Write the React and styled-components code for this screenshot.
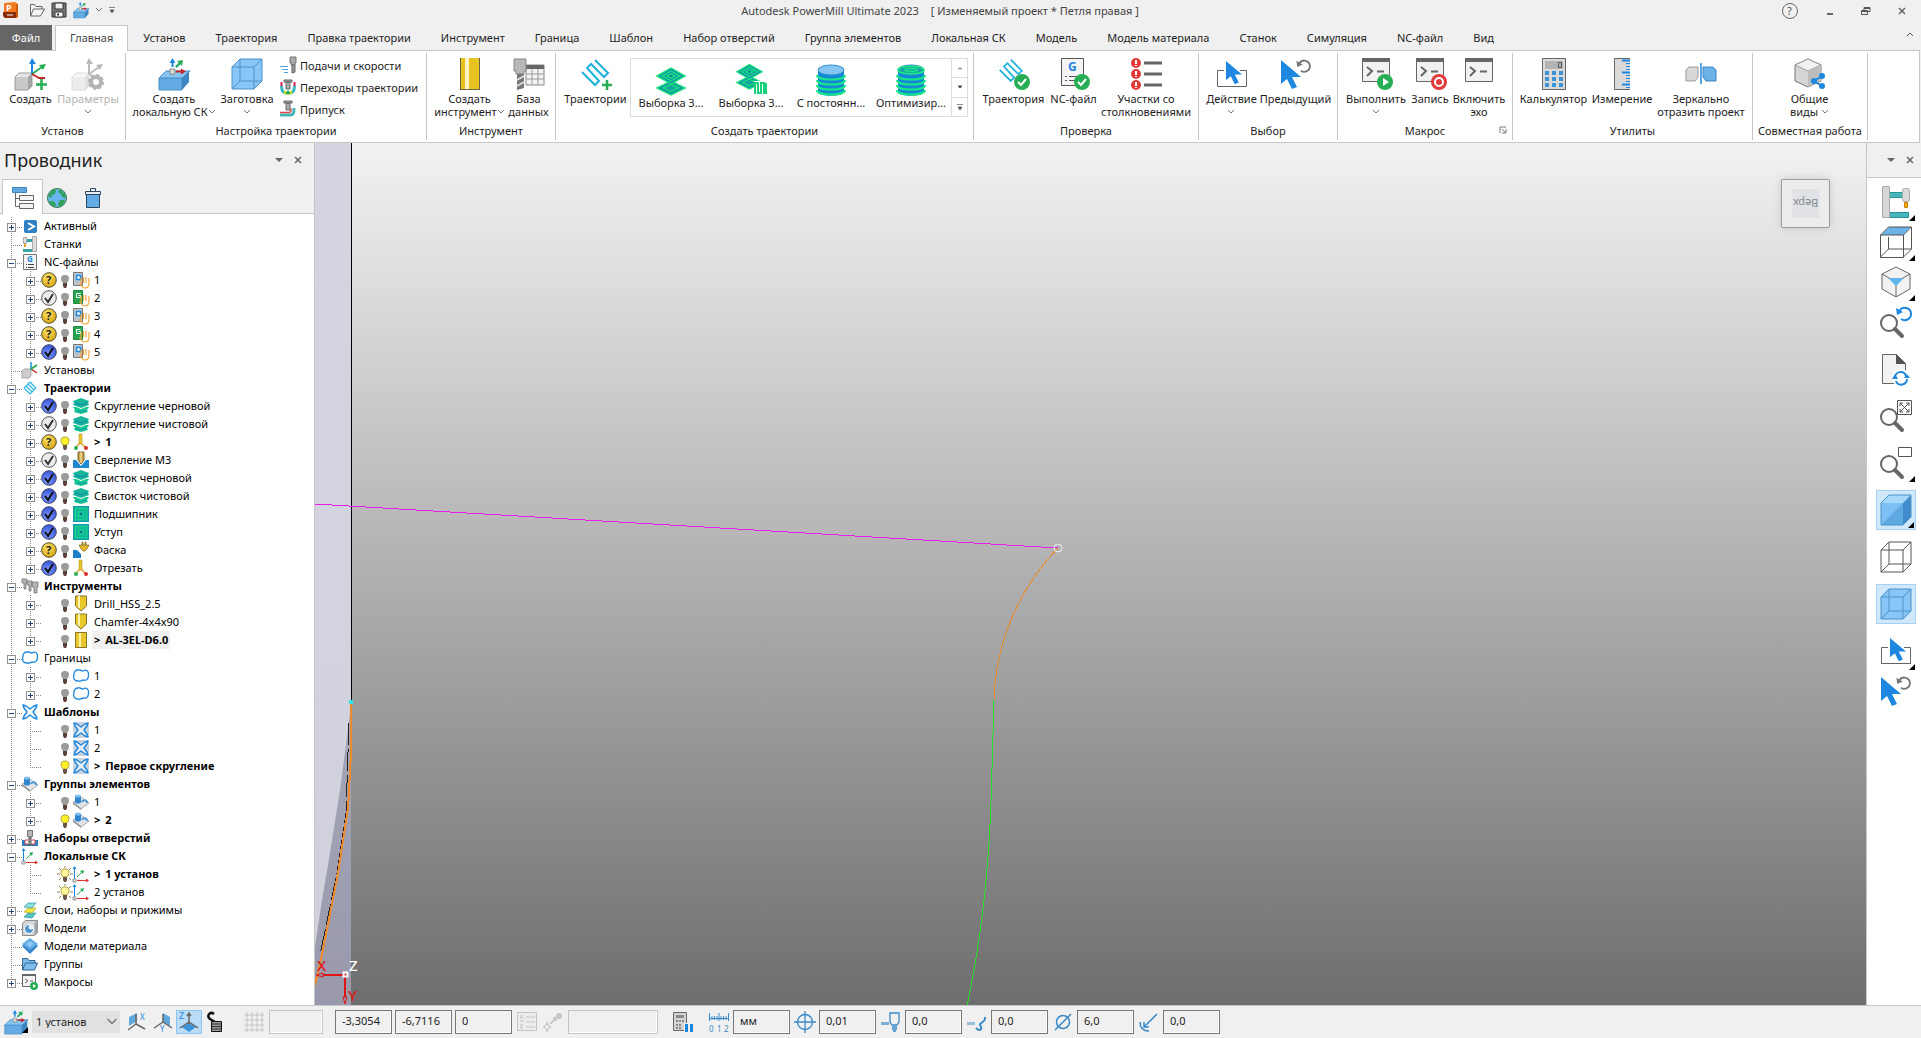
import { Fragment } from 'react'
import styled, { createGlobalStyle, css } from 'styled-components'

const GlobalStyle = createGlobalStyle`
  :root {
    --bg: #f0f0f0;
    --line: #c6c6c6;
    --text: #1e1e1e;
    --grey: #666;
    --blue: #1e88e0;
    --text-sm: 11px;
    --text-xl: 18px;
  }

  * {
    box-sizing: border-box;
  }

  body {
    margin: 0;
    background: var(--bg);
    color: var(--text);
    font-family: 'Noto Sans', 'Open Sans', sans-serif;
    font-size: var(--text-sm);
    line-height: 13px;
  }

  button,
  input,
  select {
    font: inherit;
    color: inherit;
  }
`

/* ---------- icons ---------- */

const cubeWire = (
  <path d="M1 9h22v22H1zM1 9l8-8h22l-8 8M31 1v22l-8 8M9 1v22h22M9 23l-8 8" />
)

const cursor = <path d="M0 0v24l6-5 5 10 5-2-5-10h9z" fill="#1e88e0" />

const lens = (
  <g fill="none" stroke="#666">
    <circle cx="9" cy="17" r="8" strokeWidth="2" />
    <path d="M15 23l7 7" strokeWidth="4" strokeLinecap="round" />
  </g>
)

const terminal = (
  <g>
    <path d="M2.500 1.500h27v22h-27z" fill="#f2f2f2" stroke="#666" />
    <path d="M2 0h28v4H2z" fill="#666" />
    <path d="M7 9l5 4-5 5M17 13.500h7" fill="none" stroke="#666" strokeWidth="2" />
  </g>
)

const okBadge = (
  <g>
    <circle cx="24" cy="24" r="8" fill="#27ae55" />
    <path d="M20 24l3 3 5-6" fill="none" stroke="#fff" strokeWidth="2" />
  </g>
)

const snake = (
  <path
    d="M2 14l13 13 4-4L7 10l4-4 13 13 4-4L15 2"
    fill="none"
    stroke="#1bb1dc"
    strokeWidth="2"
  />
)

const layers = (
  <g stroke="#16e07c" strokeWidth="1.500">
    <path d="M2 24l14-7 14 7-14 7z" fill="#1283b5" />
    <path d="M8 24l8-4 8 4-8 4z" fill="#12a99c" />
    <path d="M2 12l14-8 14 8-14 8z" fill="#1283b5" />
    <path d="M7 12l9-5 9 5-9 5z" fill="#1490b0" />
    <path d="M12 12l4-2 4 2-4 2z" fill="#0f6f9c" />
  </g>
)

const axes = (blue, green, red) => (
  <g fill="none" strokeWidth="2">
    <path d="M17 16V4" stroke={blue} />
    <path d="M17 0l4 6h-7z" fill={blue} />
    <path d="M17 16l10-7" stroke={green} />
    <path d="M31 6l-7 1 4 5z" fill={green} />
    <path d="M17 16l7 4h6" stroke={red} />
  </g>
)

const block = (
  <g strokeWidth="1">
    <path d="M1 20h23v12H1z" fill="#63abe2" stroke="#4a90c8" />
    <path d="M1 20l7-7h24l-7 7z" fill="#86c5f2" stroke="#4a90c8" />
    <path d="M24 20l7-7v11l-7 8z" fill="#3f86c0" />
    <path d="M12 11h5v5h-5z" fill="#ddd" stroke="#888" />
    <path d="M14.500 9V3M18 9l5-5" fill="none" stroke="#1e88e0" strokeWidth="2" />
    <path d="M14.500 0l3 5h-6z" fill="#1e88e0" />
    <path d="M18 9l4-4" stroke="#27ae55" strokeWidth="2" />
    <path d="M25 2l-1 6-5-5z" fill="#27ae55" />
    <path d="M18 13.500h6" stroke="#c62828" strokeWidth="2" />
    <path d="M28 13.500l-5-3v6z" fill="#c62828" />
  </g>
)

const greyCube = (
  <g>
    <path d="M0 19h13v13H0z" fill="#c9c9c9" />
    <path d="M0 19l4-4h13l-4 4z" fill="#e4e4e4" />
    <path d="M13 19l4-4v13l-4 4z" fill="#a5a5a5" />
    <path d="M0 19l4-4h13v13l-4 4H0z" fill="none" stroke="#9a9a9a" />
  </g>
)

const rings = top => (
  <g>
    <path d="M3 6v22c0 5 26 5 26 0V6z" fill="#1488d8" />
    <ellipse cx="16" cy="6" rx="13" ry="5" fill={top} stroke="#2f8fce" />
    <path
      d="M2 11c0 6 28 6 28 0M2 16c0 6 28 6 28 0M2 21c0 6 28 6 28 0M2 26c0 6 28 6 28 0"
      fill="none"
      stroke="#17e884"
      strokeWidth="2"
    />
  </g>
)

const undo = color => (
  <g fill="none" stroke={color}>
    <path d="M19 5c4-6 12-3 12 3 0 5-6 8-10 5" strokeWidth="2" />
    <path d="M16 2l1 7 6-3z" fill={color} stroke="none" />
  </g>
)

const miniLayers = (
  <g strokeWidth="1">
    <path d="M0 9h3l5 2 5-2h3l-2 3 1 2-7 2-7-2 1-2z" fill="#14c98f" />
    <path d="M2 12l6 2 6-2" fill="none" stroke="#1597b0" />
    <path d="M0 3l8-3 8 3-1 2 1 2-8 3-8-3 1-2z" fill="#16b59a" />
    <path d="M2 5l6 2 6-2" fill="none" stroke="#1283b5" />
  </g>
)

const miniAxes = (
  <g fill="none">
    <path d="M1.500 14V2" stroke="#1e88e0" />
    <path d="M1.500 0l2 3h-4z" fill="#1e88e0" />
    <path d="M4 14.500h10" stroke="#d33" />
    <path d="M16 14.500l-3-2v4z" fill="#d33" />
    <path d="M4 11l5-5" stroke="#27ae55" />
    <path d="M11 4l-1 4-3-3z" fill="#27ae55" />
    <path d="M0 13h3v3H0z" fill="#ddd" stroke="#999" strokeWidth="1" />
  </g>
)

const clover = (
  <path
    d="M1 1l3 1 4 3 4-3 3-1-1 3-3 4 3 4 1 3-3-1-4-3-4 3-3 1 1-3 3-4-3-4z"
    fill="#fff"
    fillOpacity=".6"
    stroke="#1e88e0"
    strokeWidth="1.500"
    strokeLinejoin="round"
  />
)

const bulbBase = color => (
  <path d="M6 11h4v3l-1 2H7l-1-2z" fill={color} />
)

const featurePart = (
  <g>
    <path d="M0 8l8-5 8 6-8 6z" fill="#e2e4e7" stroke="#aaa" />
    <path d="M0 8l8 6v2L0 10z" fill="#999" />
    <path d="M2 2v6c0 2 6 2 6 0V2z" fill="#2f86cf" />
    <ellipse cx="5" cy="2" rx="3" ry="1.500" fill="#7fc0ef" />
    <path d="M9 8c1-3 5-2 5 1" fill="none" stroke="#4a9ad8" strokeWidth="2" />
  </g>
)

const hand = (
  <path
    d="M6 12c2 0 2 4 6 4 3 0 4-2 4-5V6M8 13V6M10.500 11V5M13 11V5"
    fill="none"
    stroke="#f0a63a"
    strokeWidth="1.200"
  />
)

const miniTool = (
  <g fill="#b9b9b9" stroke="#777">
    <path d="M5.500.5h5v6h-5zM7 7h2v8H7z" />
    <path d="M6.500 9l3-1M6.500 12l3-1M6.500 15l3-1" stroke="#555" />
  </g>
)

const ICONS = {
  app: [
    16,
    <Fragment>
      <path d="M2 1l11-1 3 2v13l-3 1H2z" fill="#f47a1f" />
      <path d="M1 10h13v6H3l-2-2z" fill="#8a2c07" />
      <path d="M14 2l2 1v12l-2 1z" fill="#d35a0c" />
      <text x="4" y="9" fontSize="9" fontWeight="700" fill="#fff">
        P
      </text>
      <path d="M5 13h6" stroke="#fff" />
    </Fragment>,
  ],
  open: [
    16,
    <path
      d="M1.500 14V2.500h4l1.500 2h6V7M1.500 14l3-7h11l-4 7z"
      fill="#f4f4f4"
      stroke="#666"
    />,
  ],
  save: [
    16,
    <Fragment>
      <path d="M1 1h14v14H1z" fill="#777" stroke="#333" />
      <path d="M4 1h8v6H4z" fill="#eee" stroke="#333" />
      <path d="M4 10h8v5H4z" fill="#fff" stroke="#333" />
      <path d="M6 11.500h2v2H6z" fill="#333" />
    </Fragment>,
  ],
  block: [32, block],
  setupCreate: [
    32,
    <Fragment>
      {greyCube}
      {axes('#1e88e0', '#27ae55', '#c62828')}
      <path d="M26.500 21v11M21 26.500h11" stroke="#27ae55" strokeWidth="2.500" />
    </Fragment>,
  ],
  setupParams: [
    32,
    <Fragment>
      <g opacity=".35">{greyCube}</g>
      {axes('#bbb', '#bbb', '#bbb')}
      <circle cx="24" cy="24" r="5" fill="#fff" stroke="#b4b4b4" strokeWidth="4" />
      <circle
        cx="24"
        cy="24"
        r="7"
        fill="none"
        stroke="#b4b4b4"
        strokeWidth="2"
        strokeDasharray="3 2.500"
      />
    </Fragment>,
  ],
  stock: [
    32,
    <g fill="none" stroke="#4c93c9">
      <path d="M1 9l8-8h22v22l-8 8H1z" fill="#87c6f6" stroke="none" />
      {cubeWire}
    </g>,
  ],
  feeds: [
    16,
    <Fragment>
      <path d="M10 0h6v6h-1v2h-4V6h-1z" fill="#aaa" stroke="#777" />
      <path d="M12 8h3v7l-3 1z" fill="#999" stroke="#666" />
      <path d="M0 9.500h8M2 12.500h6M4 15.500h4" stroke="#4ea3dd" />
    </Fragment>,
  ],
  leads: [
    16,
    <Fragment>
      <path d="M1.500 3v5M14.500 3v5" stroke="#d81b60" strokeWidth="2" />
      <path d="M1.500 7c0 5 2 7 5 7M14.500 7c0 5-2 7-5 7" fill="none" stroke="#35b8c8" strokeWidth="3" />
      <path d="M4 13c3 2 5 2 8 0" fill="none" stroke="#dce32a" strokeWidth="3" />
      <path d="M8 11l3 4H5z" fill="#27ae55" />
      <path d="M4 1h8v2H4zM6 3h4v7H6z" fill="#aaa" stroke="#666" />
    </Fragment>,
  ],
  thickness: [
    16,
    <Fragment>
      <path d="M4 0h8v2H4zM6 2h4v7H6z" fill="#aaa" stroke="#666" />
      <path d="M0 14h10c4 0 4-3 4-7" fill="none" stroke="#45b5b8" strokeWidth="3" />
      <path d="M0 11.500h8c3 0 3-1 3-4" fill="none" stroke="#e04848" strokeWidth="1.500" />
    </Fragment>,
  ],
  toolCreate: [
    32,
    <Fragment>
      <path d="M6 0h20v32H6z" fill="#e6c321" />
      <path d="M11 0h4v32h-4z" fill="#fdf3c4" />
      <path d="M6.500 0v32M25.500 0v32" stroke="#6b6640" />
      <path d="M6 31.500h20" stroke="#6b6640" />
    </Fragment>,
  ],
  toolDb: [
    32,
    <Fragment>
      <path d="M13 7h18v20H13z" fill="#f3f3f3" stroke="#888" />
      <path d="M13 7h18v4H13z" fill="#666" />
      <path d="M13 16h18M13 21h18M19 11v16M25 11v16" stroke="#999" />
      <path d="M1 1h12v12h-2v3H3v-3H1z" fill="#b8b8b8" stroke="#888" />
      <path d="M4 16h7v14l-7 2z" fill="#777" />
      <path d="M4 22l7-4M4 28l7-4" stroke="#ddd" strokeWidth="2" />
    </Fragment>,
  ],
  snakeAdd: [
    32,
    <Fragment>
      {snake}
      <path d="M27 22v10M22 27h10" stroke="#27ae55" strokeWidth="2.500" />
    </Fragment>,
  ],
  snakeOk: [
    32,
    <Fragment>
      <g transform="scale(.85)">{snake}</g>
      {okBadge}
    </Fragment>,
  ],
  layers: [32, layers],
  layersRest: [
    32,
    <Fragment>
      <g transform="translate(0 -3) scale(.9)">{layers}</g>
      <path d="M19 17h13v14H19z" fill="#fff" />
      <path d="M20 30V19h3v10h3V19h3v10h2V19" fill="none" stroke="#17d27c" strokeWidth="2" />
    </Fragment>,
  ],
  rings: [32, rings('#86c5f2')],
  ringsOpt: [
    32,
    <Fragment>
      {rings('#1aa0a8')}
      <path d="M3 6c0-5 26-5 26 0s-26 5-26 0M10 6c0-2 12-2 12 0s-12 2-12 0" fill="none" stroke="#17e884" strokeWidth="1.500" />
    </Fragment>,
  ],
  ncOk: [
    32,
    <Fragment>
      <path d="M3.500.5h22v27h-22z" fill="#f4f4f4" stroke="#555" />
      <text x="10" y="13" fontSize="12" fontWeight="700" fill="#1e88e0">
        G
      </text>
      <path d="M7 18.500h2M7 22.500h2M11 18.500h10M11 22.500h6" stroke="#555" />
      {okBadge}
    </Fragment>,
  ],
  collisions: [
    32,
    <Fragment>
      {[5, 16, 27].map(y => (
        <g key={y}>
          <circle cx="6" cy={y} r="5" fill="#e33b3b" />
          <path d={`M6 ${y - 3}v4M6 ${y + 2}v1`} stroke="#fff" strokeWidth="2" />
          <path d={`M14 ${y}h18`} stroke="#666" strokeWidth="3" />
        </g>
      ))}
    </Fragment>,
  ],
  selectBox: [
    32,
    <Fragment>
      <path d="M8 12.500H1.500v16h29v-16H24" fill="none" stroke="#666" />
      <g transform="translate(10 3) scale(.8)">{cursor}</g>
    </Fragment>,
  ],
  selectPrev: [
    32,
    <Fragment>
      <g transform="translate(1 2)">{cursor}</g>
      <g transform="translate(2 1) scale(.9)">{undo('#777')}</g>
    </Fragment>,
  ],
  run: [
    32,
    <Fragment>
      {terminal}
      <circle cx="25" cy="24" r="8" fill="#27ae55" />
      <path d="M23 20l6 4-6 4z" fill="#fff" />
    </Fragment>,
  ],
  record: [
    32,
    <Fragment>
      {terminal}
      <circle cx="25" cy="24" r="8" fill="#e33b3b" />
      <circle cx="25" cy="24" r="4" fill="#e33b3b" stroke="#fff" strokeWidth="2" />
    </Fragment>,
  ],
  terminal: [32, terminal],
  calculator: [
    32,
    <Fragment>
      <path d="M4.500.5h23v31h-23z" fill="#d9d9d9" stroke="#666" />
      <path d="M7 3h18v8H7z" fill="#b4b4b4" />
      <path d="M20.500 4.500h3v5h-3z" fill="none" stroke="#555" />
      <path
        d="M7 13h4v4H7zM14 13h4v4h-4zM21 13h4v4h-4zM7 19h4v4H7zM14 19h4v4h-4zM21 19h4v4h-4zM7 25h4v4H7zM14 25h4v4h-4zM21 25h4v4h-4z"
        fill="#3c93d6"
      />
    </Fragment>,
  ],
  measure: [
    32,
    <Fragment>
      <path d="M8 0h16v32H8z" fill="#d9d9d9" />
      <path d="M24 .5H8.500v31H24" fill="none" stroke="#666" />
      <path d="M16 2.500h8M16 14.500h8M16 26.500h8" stroke="#1e88e0" strokeWidth="2" />
      <path d="M20 5.500h4M20 8.500h4M20 11.500h4M20 17.500h4M20 20.500h4M20 23.500h4M20 29.500h4" stroke="#1e88e0" />
    </Fragment>,
  ],
  mirror: [
    32,
    <Fragment>
      <path d="M1 12l3-3h9v10l-3 4H1z" fill="#d8d8d8" stroke="#999" />
      <path d="M18 9h10l3 3v11H21l-3-4z" fill="#6bb2e6" stroke="#3f86c0" />
      <path d="M16 5v21" stroke="#1e88e0" strokeWidth="1.500" />
    </Fragment>,
  ],
  shared: [
    32,
    <Fragment>
      <path d="M1 7l13-6 13 6v16l-13 6-13-6z" fill="#d6d6d6" stroke="#777" />
      <path d="M1 7l13 6 13-6-13-6z" fill="#f1f1f1" stroke="#999" />
      <path d="M14 13v16l13-6V7z" fill="#bdbdbd" />
      <path d="M28 18l-8 5 8 5" fill="none" stroke="#1e88e0" strokeWidth="2" />
      <g fill="#1e88e0">
        <circle cx="28" cy="18" r="3" />
        <circle cx="20" cy="23" r="3" />
        <circle cx="28" cy="28" r="3" />
      </g>
    </Fragment>,
  ],
  treeTab: [
    22,
    <Fragment>
      <path d="M.5.5h14v5H.5z" fill="#5fa8de" stroke="#3f86c0" />
      <path d="M3.500 6v13.500H7M3.500 11.500H7" fill="none" stroke="#666" />
      <path d="M7.500 8.500h14v5h-14zM7.500 16.500h14v5h-14z" fill="#f4f4f4" stroke="#666" />
    </Fragment>,
  ],
  globe: [
    20,
    <Fragment>
      <circle cx="10" cy="10" r="9.500" fill="#69b5ee" stroke="#357a49" />
      <path d="M1 8l5-7 3 1-1 4-3 1-1 3zM13 1l5 5 1 4-4-1-1-3-3-2zM13 12l5 0-2 5-4 2-1-3zM2 13l4 0 3 3-1 3-4-2z" fill="#2fa35a" />
    </Fragment>,
  ],
  trash: [
    20,
    <Fragment>
      <path d="M3.500 6.500h13v13h-13z" fill="#63abe2" stroke="#2b4560" />
      <path d="M2.500 3.500h15v3h-15zM7.500 3V.5h5V3" fill="#e8f0f6" stroke="#2b4560" />
    </Fragment>,
  ],
  active: [
    16,
    <Fragment>
      <rect x="2" y="2" width="13" height="13" rx="2" fill="#2e7fc4" />
      <path d="M6 5l6 3.500-6 3.500" fill="none" stroke="#fff" strokeWidth="2" />
    </Fragment>,
  ],
  machine: [
    16,
    <Fragment>
      <path d="M4 3h7v3H4zM1 13h11v3H1z" fill="#38a3a5" />
      <path d="M10.500.5h4v15h-4z" fill="#ddd" stroke="#aaa" />
      <path d="M1.500 1.500h3v6h-3z" fill="#ddd" stroke="#aaa" />
      <path d="M2 8h2v3H2z" fill="#e8a020" />
    </Fragment>,
  ],
  nc: [
    16,
    <Fragment>
      <path d="M1.500.5h13v15h-13z" fill="#f4f4f4" stroke="#777" />
      <text x="5" y="8" fontSize="8" fontWeight="700" fill="#1e88e0">
        G
      </text>
      <path d="M4 10.500h1M4 13.500h1M6 10.500h6M6 13.500h6" stroke="#444" />
    </Fragment>,
  ],
  ncGrey: [
    16,
    <Fragment>
      <path d="M.5.5h9v13h-9z" fill="#bcc5cc" stroke="#777" />
      <path d="M3.500 3.500h4v4h-4z" fill="#fff" stroke="#1e88e0" strokeWidth="1.500" />
      {hand}
    </Fragment>,
  ],
  ncGreen: [
    16,
    <Fragment>
      <path d="M.5.5h9v13h-9z" fill="#27a550" stroke="#1b8a40" />
      <path d="M7.500 3.500h-4v4h4v-2h-2" fill="none" stroke="#fff" />
      {hand}
    </Fragment>,
  ],
  question: [
    16,
    <Fragment>
      <circle cx="8" cy="8" r="7.300" fill="url(#yellowBall)" stroke="#54502c" />
      <text x="5" y="12" fontSize="11" fontWeight="700" fill="#222">
        ?
      </text>
    </Fragment>,
  ],
  okGrey: [
    16,
    <Fragment>
      <circle cx="8" cy="8" r="7.300" fill="#ececec" stroke="#555" />
      <path d="M4 8l3 4 5-8" fill="none" stroke="#333" strokeWidth="2" />
    </Fragment>,
  ],
  okBlue: [
    16,
    <Fragment>
      <circle cx="8" cy="8" r="7.300" fill="url(#blueBall)" stroke="#3c4270" />
      <path d="M4 8l3 4 5-8" fill="none" stroke="#111" strokeWidth="2" />
    </Fragment>,
  ],
  bulbOff: [
    16,
    <Fragment>
      <path d="M8 3c-6 0-4 6-2 8h4c2-2 4-8-2-8z" fill="#9b9b9b" />
      {bulbBase('#5a4038')}
    </Fragment>,
  ],
  bulbOn: [
    16,
    <Fragment>
      <path d="M8 3c-6 0-4 6-2 8h4c2-2 4-8-2-8z" fill="#fff02a" stroke="#b5a53a" />
      {bulbBase('#6a5548')}
    </Fragment>,
  ],
  bulbRays: [
    16,
    <Fragment>
      <path d="M8 0v2M2 2l2 2M14 2l-2 2M0 8h3M16 8h-3M2 14l2-2M14 14l-2-2" stroke="#8a8358" />
      <path d="M8 3c-6 0-4 6-2 8h4c2-2 4-8-2-8z" fill="#fff6a0" stroke="#b5a53a" />
      {bulbBase('#6a5548')}
    </Fragment>,
  ],
  setups: [
    16,
    <Fragment>
      <path d="M0 9l2-2h7v7l-2 2H0z" fill="#ccc" stroke="#aaa" />
      <path d="M9 7l6 4" stroke="#c62828" strokeWidth="1.500" />
      <path d="M9 8V0" stroke="#1e88e0" strokeWidth="1.500" />
      <path d="M9 7l6-4" stroke="#27ae55" strokeWidth="2" />
    </Fragment>,
  ],
  paths: [
    16,
    <path d="M2 8l6 6M4 6l6 6M6 4l6 6M8 2l6 6M2 8l6-6M8 14l6-6" fill="none" stroke="#29b6e0" strokeWidth="1.200" />,
  ],
  miniLayers: [16, miniLayers],
  swarf: [
    16,
    <Fragment>
      <path d="M6 0h3v10H6z" fill="#ecc92a" stroke="#9b8a20" strokeWidth=".5" />
      <path d="M7 9l-5 5M8 9l5 5" stroke="#e0a52a" strokeWidth="1.500" />
      <circle cx="3" cy="14" r="2" fill="#27ae55" />
      <circle cx="13" cy="14" r="2" fill="#d83030" />
    </Fragment>,
  ],
  drilling: [
    16,
    <Fragment>
      <path d="M0 8h3l5 6 5-6h3v8H0z" fill="#1e88d0" />
      <path d="M5 0h6v8l-3 4-3-4z" fill="#caa44a" stroke="#7a6330" />
      <path d="M8 0v11" stroke="#fff0c0" />
    </Fragment>,
  ],
  profile: [
    16,
    <Fragment>
      <path d="M0 0h16v16H0z" fill="#17b598" />
      <path d="M2.500 2.500h11v11h-11zM5.500 5.500h5v5h-5z" fill="none" stroke="#0fd690" />
      <path d="M.5.5h15v15H.5z" fill="none" stroke="#1597b0" />
      <path d="M7 7h2v2H7z" fill="#0b6d84" />
    </Fragment>,
  ],
  chamfer: [
    16,
    <Fragment>
      <path d="M0 8h4l4 4v4H0z" fill="#1e7fc8" />
      <path d="M6 3h10l-2 4-2 2h-2L8 7zM9 0h1v3H9zM12 0h1v3h-1z" fill="#e3b92c" stroke="#77641c" strokeWidth=".7" />
    </Fragment>,
  ],
  tools: [
    16,
    <g fill="#b5b5b5" stroke="#777" strokeWidth=".8">
      <path d="M0 1h5v4H4v6H2V5H0zM5 3h5v4H9v6H7V7H5zM10 4h6v5h-1v6h-3V9h-2z" />
    </g>,
  ],
  drillTool: [
    16,
    <Fragment>
      <path d="M2.500 0h11v10l-5.500 5-5.500-5z" fill="#e9c82a" stroke="#857528" />
      <path d="M6 0v12" stroke="#fff3b0" strokeWidth="2" />
    </Fragment>,
  ],
  endMill: [
    16,
    <Fragment>
      <path d="M2.500.5h11v15h-11z" fill="#e9c82a" stroke="#857528" />
      <path d="M7 1v14" stroke="#fff3b0" strokeWidth="2" />
    </Fragment>,
  ],
  boundary: [
    16,
    <path
      d="M5 2c2-1 3 1 5 1 3-2 6 0 5.500 4 0 4-2 6-5 5-2 0-3 2-5.500 1C1 13 0 10 .8 7 1 4 2 2 5 2z"
      fill="#fff"
      stroke="#1e88e0"
      strokeWidth="1.300"
    />,
  ],
  clover: [16, clover],
  cloverBox: [
    16,
    <Fragment>
      <rect width="16" height="16" rx="4" fill="#c9d3dd" />
      {clover}
    </Fragment>,
  ],
  feature: [16, featurePart],
  holes: [
    16,
    <Fragment>
      <path d="M0 10h16v6H0z" fill="#2f7fc4" />
      <path d="M3 10h10v4H3z" fill="#fff" stroke="#e04040" />
      {miniTool}
    </Fragment>,
  ],
  workplanes: [16, miniAxes],
  levels: [
    16,
    <Fragment>
      <path d="M2 15l4-4h8l-4 5z" fill="#53c3c6" stroke="#2c9a9d" strokeWidth=".7" />
      <path d="M2 10l4-4h8l-4 5z" fill="#f4e640" stroke="#b9a920" strokeWidth=".7" />
      <path d="M2 5l4-4h8l-4 5z" fill="#8fdcdc" stroke="#2c9a9d" strokeWidth=".7" />
    </Fragment>,
  ],
  models: [
    16,
    <Fragment>
      <path d="M.5 3l3-2.500h12v12l-3 3H.5z" fill="#d4d6d8" stroke="#8b8b8b" />
      <path d="M12.500 3v12.500l3-3V.5z" fill="#a2a5a8" />
      <circle cx="7" cy="9" r="4.500" fill="#4c93cf" stroke="#fff" />
      <circle cx="9" cy="7" r="2.500" fill="#e8f2fa" />
    </Fragment>,
  ],
  stockModel: [
    16,
    <Fragment>
      <path d="M0 8l8-7 8 7-8 8z" fill="#2f86cf" />
      <path d="M0 6l8-6 8 6-8 6z" fill="#63abe2" />
      <path d="M4 6l4-3 4 3-4 3z" fill="#8fc8f2" />
    </Fragment>,
  ],
  folder: [
    16,
    <path d="M.5 14V2.500h5l1.500 2h6V7M.5 14l3-7h12l-3 7z" fill="#7dbdec" stroke="#33658e" />,
  ],
  macros: [
    16,
    <Fragment>
      <path d="M.5 1.500h13v11H.5z" fill="#f4f4f4" stroke="#666" />
      <path d="M0 0h14v2H0z" fill="#666" />
      <path d="M3 5l3 2-3 2M8 7h3" fill="none" stroke="#666" />
      <circle cx="12" cy="12" r="4" fill="#27ae55" />
      <path d="M11 10l3 2-3 2z" fill="#fff" />
    </Fragment>,
  ],
  machineBig: [
    32,
    <Fragment>
      <path d="M9.500 6.500h13v5h-13zM9.500 26.500h19v5h-19z" fill="#46b6bd" stroke="#2e8f96" />
      <path d="M2.500.5h7v31h-7z" fill="#d6d6d6" stroke="#aaa" />
      <rect x="22.500" y="2.500" width="7" height="13" rx="2" fill="#d9d9d9" stroke="#aaa" />
      <path d="M24.500 16.500h3v5h-3z" fill="#f3a712" stroke="#c98500" />
    </Fragment>,
  ],
  viewTop: [
    32,
    <Fragment>
      <path d="M1 9l8-8h22l-8 8z" fill="#6bb2e6" />
      <g fill="none" stroke="#555">
        <path d="M.5 9h23v22.500H.5zM.5 9l8-8h23l-8 8M31.500 1v22l-8 8M8.500 11v12M8.500 23H31M8.500 23l-8 8" />
      </g>
    </Fragment>,
  ],
  viewIso: [
    32,
    <Fragment>
      <path d="M2 8l14-7 14 7v15l-14 8-14-8z" fill="#f2f2f2" stroke="#666" />
      <path d="M2 8l14 8 14-8M16 16v15" fill="none" stroke="#666" />
      <path d="M8 12h16l-8 8z" fill="#63b2ee" />
    </Fragment>,
  ],
  zoomPrev: [
    32,
    <Fragment>
      {lens}
      {undo('#1e88e0')}
    </Fragment>,
  ],
  refresh: [
    32,
    <Fragment>
      <path d="M2.500 1.500h14l9 9v20h-23z" fill="#f2f2f2" stroke="#666" />
      <path d="M16 1v10h10z" fill="#555" />
      <circle cx="21" cy="25" r="9" fill="#fff" />
      <path d="M15 25c0-7 9-8 11-2M27 26c0 6-9 8-11 2" fill="none" stroke="#1e88e0" strokeWidth="2" />
      <path d="M12 26h6l-3-5zM24 25h6l-3-4z" fill="#1e88e0" />
    </Fragment>,
  ],
  zoomFit: [
    32,
    <Fragment>
      {lens}
      <path d="M17.500.5h14v14h-14z" fill="#fff" stroke="#555" />
      <path d="M20 3l9 9M29 3l-9 9M20 6V3h3M26 3h3v3M29 9v3h-3M23 12h-3V9" fill="none" stroke="#555" />
    </Fragment>,
  ],
  zoomBox: [
    32,
    <Fragment>
      {lens}
      <path d="M18.500.5h13v9h-13z" fill="#fff" stroke="#555" />
    </Fragment>,
  ],
  shaded: [
    32,
    <Fragment>
      <path d="M1 9h22v22H1z" fill="#7cc0f5" />
      <path d="M23 9v22H1z" fill="#5fa9e2" />
      <path d="M1 9l8-8h22l-8 8z" fill="#a5d8fb" />
      <path d="M23 9l8-8v22l-8 8z" fill="#3f8bcb" />
      <path d="M1 9l8-8h22v22l-8 8H1z" fill="none" stroke="#4c93c9" />
    </Fragment>,
  ],
  wire: [
    32,
    <g fill="none" stroke="#555">
      {cubeWire}
    </g>,
  ],
  planeX: [
    20,
    <Fragment>
      <path d="M2 5l8-4v8l-8 5z" fill="#5fa8de" />
      <path d="M9 2v10M9 12l-8 6M9 12l9 5" fill="none" stroke="#666" strokeWidth="1.500" />
      <text x="13" y="8" fontSize="8" fill="#1e88e0">
        X
      </text>
    </Fragment>,
  ],
  planeY: [
    20,
    <Fragment>
      <path d="M10 1l7 4v9l-7-4z" fill="#5fa8de" />
      <path d="M10 2v8M10 10l-9 6M10 10l9 6" fill="none" stroke="#666" strokeWidth="1.500" />
      <text x="7" y="20" fontSize="8" fill="#1e88e0">
        Y
      </text>
    </Fragment>,
  ],
  planeZ: [
    20,
    <Fragment>
      <path d="M3 15l7-4 7 4-7 5z" fill="#3c93d6" />
      <path d="M10 12V1M10 10l-9 6M10 10l9 6M8 4l2-3 2 3" fill="none" stroke="#666" strokeWidth="1.500" />
      <text x="0" y="7" fontSize="9" fill="#1e88e0">
        Z
      </text>
    </Fragment>,
  ],
  lock: [
    20,
    <Fragment>
      <path d="M10 10L5 7C1 4 5-1 9 2" fill="none" stroke="#111" strokeWidth="2.500" />
      <path d="M6.500 9.500h10v10h-10z" fill="#999" stroke="#111" />
      <path d="M7 12h9M7 14.500h9M7 17h9" stroke="#333" />
    </Fragment>,
  ],
  grid: [
    20,
    <path d="M0 3h20M0 8h20M0 13h20M0 18h20M3 0v20M8 0v20M13 0v20M18 0v20" stroke="#c4c4c4" />,
  ],
  xyz: [
    20,
    <Fragment>
      <path d="M.5.5h19v18H.5z" fill="#ececec" stroke="#c4c4c4" />
      <path d="M3 3l3 4M6 3L3 7M3 8l2 2 2-2M3 13h3l-3 3h3M9 5h9M9 10h9M9 15h9" fill="none" stroke="#c4c4c4" />
    </Fragment>,
  ],
  points: [
    20,
    <g fill="none" stroke="#c0c0c0">
      <circle cx="4" cy="15" r="2.500" />
      <path d="M4 10v3M4 17v3M0 15h2M6 15h2M7 12l6-6M13 9V6h-3" strokeWidth="1.500" />
      <circle cx="16" cy="4" r="2.500" fill="#c8c8c8" />
    </g>,
  ],
  calcPause: [
    20,
    <Fragment>
      <path d="M.5.5h13v18H.5z" fill="#d5d5d5" stroke="#666" />
      <path d="M3 3h8v3H3zM3 8h2v2H3zM6 8h2v2H6zM9 8h2v2H9zM3 12h2v2H3zM6 12h2v2H6zM3 15h2v2H3zM6 15h2v2H6z" fill="#888" />
      <path d="M11 11h9v9h-9z" fill="#f0f0f0" />
      <path d="M12 12h3v8h-3zM17 12h3v8h-3z" fill="#1e88e0" />
    </Fragment>,
  ],
  ruler: [
    20,
    <Fragment>
      <path d="M.5 1v8M10 1v8M19.500 1v8M3 4v4M5.500 4v4M8 4v4M12 4v4M14.500 4v4M17 4v4M0 6.500h20" stroke="#3a8ac8" />
      <text x="0" y="20" fontSize="8" fill="#3a8ac8">
        0
      </text>
      <text x="8" y="20" fontSize="8" fill="#3a8ac8">
        1
      </text>
      <text x="15" y="20" fontSize="8" fill="#3a8ac8">
        2
      </text>
    </Fragment>,
  ],
  crosshair: [
    20,
    <g fill="none" stroke="#3a8ac8" strokeWidth="1.300">
      <circle cx="10" cy="10" r="7.500" />
      <path d="M10-1v22M-1 10h22" />
    </g>,
  ],
  toolTol: [
    20,
    <g fill="none" stroke="#3a8ac8" strokeWidth="1.300">
      <path d="M9 1h9v9l-2 3h-5l-2-3zM11 15h5M11 17h5M12 19h3M1 10v3M3 10v3M5 10v3M7 10v3" />
    </g>,
  ],
  curveTol: [
    20,
    <g fill="none" stroke="#3a8ac8">
      <path d="M9 16c4 4 7 1 4-3-1-3 6-2 5-8" strokeWidth="2" />
      <path d="M1 10v3M3 10v3M5 10v3M7 10v3" />
    </g>,
  ],
  diameter: [
    20,
    <g fill="none" stroke="#3a8ac8" strokeWidth="1.500">
      <circle cx="10" cy="10" r="6.500" />
      <path d="M2 18L18 2" />
    </g>,
  ],
  radius: [
    20,
    <g fill="none" stroke="#3a8ac8" strokeWidth="1.500">
      <path d="M18 2L5 15M5 10v5h5M1 10c0 6 3 9 9 9" />
    </g>,
  ],
  help: [
    18,
    <Fragment>
      <circle cx="9" cy="9" r="7.500" fill="none" stroke="#666" />
      <text x="6" y="13" fontSize="11" fill="#555">
        ?
      </text>
    </Fragment>,
  ],
  minimize: [10, <path d="M2 8h6" stroke="#666" strokeWidth="2" />],
  restore: [
    10,
    <path d="M.5 4.500h6v4h-6zM.5 5.500h6M3 4V1.500h6v4H7M3 2.500h6" fill="none" stroke="#555" />,
  ],
  close: [10, <path d="M2 2l6 6M8 2L2 8" stroke="#666" strokeWidth="1.500" />],
  chevronDown: [8, <path d="M1 2l3 3 3-3" fill="none" stroke="#777" />],
  chevronUp: [8, <path d="M1 5l3-3 3 3" fill="none" stroke="#555" />],
  caret: [8, <path d="M0 2h8L4 6z" fill="#666" />],
  caretSmall: [6, <path d="M1 2h4L3 4z" fill="#555" stroke="#555" />],
  caretUpSmall: [6, <path d="M1 4h4L3 2z" fill="#aaa" stroke="#aaa" />],
  overflow: [6, <path d="M0 .5h6M1 3h4L3 6z" fill="#555" stroke="#555" strokeWidth=".7" />],
  launcher: [8, <path d="M1 7V1h6M3 3l3 3M7 3v4H3" fill="none" stroke="#777" />],
}

const Icon = ({ name, size }) => {
  const [box, drawing] = ICONS[name]
  return (
    <Drawing
      width={size || box}
      height={size || box}
      viewBox={`0 0 ${box} ${box}`}
      aria-hidden="true"
    >
      {drawing}
    </Drawing>
  )
}

/* ---------- data ---------- */

const TABS = [
  'Установ',
  'Траектория',
  'Правка траектории',
  'Инструмент',
  'Граница',
  'Шаблон',
  'Набор отверстий',
  'Группа элементов',
  'Локальная СК',
  'Модель',
  'Модель материала',
  'Станок',
  'Симуляция',
  'NC-файл',
  'Вид',
]

const GALLERY = [
  ['layers', 'Выборка 3...'],
  ['layersRest', 'Выборка 3...'],
  ['rings', 'С постоянн...'],
  ['ringsOpt', 'Оптимизир...'],
]

// bold items with `current` get the ">" marker
const TREE = [
  { icon: 'active', label: 'Активный', sign: '+' },
  { icon: 'machine', label: 'Станки' },
  {
    icon: 'nc',
    label: 'NC-файлы',
    items: [
      { sign: '+', state: 'question', bulb: 'bulbOff', icon: 'ncGrey', label: '1' },
      { sign: '+', state: 'okGrey', bulb: 'bulbOff', icon: 'ncGreen', label: '2' },
      { sign: '+', state: 'question', bulb: 'bulbOff', icon: 'ncGrey', label: '3' },
      { sign: '+', state: 'question', bulb: 'bulbOff', icon: 'ncGreen', label: '4' },
      { sign: '+', state: 'okBlue', bulb: 'bulbOff', icon: 'ncGrey', label: '5' },
    ],
  },
  { icon: 'setups', label: 'Установы' },
  {
    icon: 'paths',
    label: 'Траектории',
    bold: true,
    items: [
      { sign: '+', state: 'okBlue', bulb: 'bulbOff', icon: 'miniLayers', label: 'Скругление черновой' },
      { sign: '+', state: 'okGrey', bulb: 'bulbOff', icon: 'miniLayers', label: 'Скругление чистовой' },
      { sign: '+', state: 'question', bulb: 'bulbOn', icon: 'swarf', label: '1', current: true },
      { sign: '+', state: 'okGrey', bulb: 'bulbOff', icon: 'drilling', label: 'Сверление М3' },
      { sign: '+', state: 'okBlue', bulb: 'bulbOff', icon: 'miniLayers', label: 'Свисток черновой' },
      { sign: '+', state: 'okBlue', bulb: 'bulbOff', icon: 'miniLayers', label: 'Свисток чистовой' },
      { sign: '+', state: 'okBlue', bulb: 'bulbOff', icon: 'profile', label: 'Подшипник' },
      { sign: '+', state: 'okBlue', bulb: 'bulbOff', icon: 'profile', label: 'Уступ' },
      { sign: '+', state: 'question', bulb: 'bulbOff', icon: 'chamfer', label: 'Фаска' },
      { sign: '+', state: 'okBlue', bulb: 'bulbOff', icon: 'swarf', label: 'Отрезать' },
    ],
  },
  {
    icon: 'tools',
    label: 'Инструменты',
    bold: true,
    items: [
      { sign: '+', bulb: 'bulbOff', icon: 'drillTool', label: 'Drill_HSS_2.5' },
      { sign: '+', bulb: 'bulbOff', icon: 'drillTool', label: 'Chamfer-4x4x90' },
      { sign: '+', bulb: 'bulbOff', icon: 'endMill', label: 'AL-3EL-D6.0', current: true, selected: true },
    ],
  },
  {
    icon: 'boundary',
    label: 'Границы',
    items: [
      { sign: '+', bulb: 'bulbOff', icon: 'boundary', label: '1' },
      { sign: '+', bulb: 'bulbOff', icon: 'boundary', label: '2' },
    ],
  },
  {
    icon: 'clover',
    label: 'Шаблоны',
    bold: true,
    items: [
      { bulb: 'bulbOff', icon: 'cloverBox', label: '1' },
      { bulb: 'bulbOff', icon: 'cloverBox', label: '2' },
      { bulb: 'bulbOn', icon: 'cloverBox', label: 'Первое скругление', current: true },
    ],
  },
  {
    icon: 'feature',
    label: 'Группы элементов',
    bold: true,
    items: [
      { sign: '+', bulb: 'bulbOff', icon: 'feature', label: '1' },
      { sign: '+', bulb: 'bulbOn', icon: 'feature', label: '2', current: true },
    ],
  },
  { icon: 'holes', label: 'Наборы отверстий', sign: '+', bold: true },
  {
    icon: 'workplanes',
    label: 'Локальные СК',
    bold: true,
    items: [
      { bulb: 'bulbRays', icon: 'workplanes', label: '1 установ', current: true },
      { bulb: 'bulbRays', icon: 'workplanes', label: '2 установ' },
    ],
  },
  { icon: 'levels', label: 'Слои, наборы и прижимы', sign: '+' },
  { icon: 'models', label: 'Модели', sign: '+' },
  { icon: 'stockModel', label: 'Модели материала' },
  { icon: 'folder', label: 'Группы' },
  { icon: 'macros', label: 'Макросы', sign: '+' },
]

const VIEW_TOOLS = [
  { icon: 'machineBig', label: 'Станок', more: true },
  { icon: 'viewTop', label: 'Вид сверху', more: true },
  { icon: 'viewIso', label: 'Изометрия', more: true },
  { icon: 'zoomPrev', label: 'Предыдущий вид' },
  { icon: 'refresh', label: 'Обновить', gap: true },
  { icon: 'zoomFit', label: 'Показать все', gap: true },
  { icon: 'zoomBox', label: 'Увеличить рамкой', gap: true, more: true },
  { icon: 'shaded', label: 'Закраска', gap: true, more: true, on: true },
  { icon: 'wire', label: 'Каркас', gap: true },
  { icon: 'stock', label: 'Заготовка', gap: true, on: true },
  { icon: 'selectBox', label: 'Выбор рамкой', gap: true, more: true },
  { icon: 'selectPrev', label: 'Предыдущий выбор' },
]

/* ---------- parts ---------- */

const RibbonButton = ({ icon, lines, width, chevron, disabled }) => (
  <BigButton type="button" $width={width} disabled={disabled}>
    <Icon name={icon} />
    <Caption>
      {lines.map((line, i) => (
        <span key={line}>
          {line}
          {chevron === 'inline' && i === lines.length - 1 && (
            <Icon name="chevronDown" />
          )}
        </span>
      ))}
      {chevron === 'below' && (
        <span>
          <Icon name="chevronDown" />
        </span>
      )}
    </Caption>
  </BigButton>
)

const RibbonGroup = ({ title, launcher, children }) => (
  <Group>
    <GroupItems>{children}</GroupItems>
    <GroupTitle>
      <span>{title}</span>
      {launcher && (
        <Launcher type="button" aria-label="Параметры макросов">
          <Icon name="launcher" />
        </Launcher>
      )}
    </GroupTitle>
  </Group>
)

const Ribbon = () => (
  <RibbonBar>
    <RibbonGroup title="Установ">
      <RibbonButton icon="setupCreate" lines={['Создать']} width={51} />
      <RibbonButton icon="setupParams" lines={['Параметры']} width={64} chevron="below" disabled />
    </RibbonGroup>
    <RibbonGroup title="Настройка траектории">
      <RibbonButton icon="block" lines={['Создать', 'локальную СК']} width={86} chevron="inline" />
      <RibbonButton icon="stock" lines={['Заготовка']} width={60} chevron="below" />
      <SmallButtons>
        <SmallButton type="button">
          <Icon name="feeds" />
          Подачи и скорости
        </SmallButton>
        <SmallButton type="button">
          <Icon name="leads" />
          Переходы траектории
        </SmallButton>
        <SmallButton type="button">
          <Icon name="thickness" />
          Припуск
        </SmallButton>
      </SmallButtons>
    </RibbonGroup>
    <RibbonGroup title="Инструмент">
      <RibbonButton icon="toolCreate" lines={['Создать', 'инструмент']} width={75} chevron="inline" />
      <RibbonButton icon="toolDb" lines={['База', 'данных']} width={43} />
    </RibbonGroup>
    <RibbonGroup title="Создать траектории">
      <RibbonButton icon="snakeAdd" lines={['Траектории']} width={69} />
      <Gallery>
        {GALLERY.map(([icon, label]) => (
          <GalleryItem key={icon} type="button">
            <Icon name={icon} />
            {label}
          </GalleryItem>
        ))}
        <GalleryScroll>
          <button type="button" aria-label="Вверх">
            <Icon name="caretUpSmall" />
          </button>
          <button type="button" aria-label="Вниз">
            <Icon name="caretSmall" />
          </button>
          <button type="button" aria-label="Все стратегии">
            <Icon name="overflow" />
          </button>
        </GalleryScroll>
      </Gallery>
    </RibbonGroup>
    <RibbonGroup title="Проверка">
      <RibbonButton icon="snakeOk" lines={['Траектория']} width={69} />
      <RibbonButton icon="ncOk" lines={['NC-файл']} width={51} />
      <RibbonButton icon="collisions" lines={['Участки со', 'столкновениями']} width={94} />
    </RibbonGroup>
    <RibbonGroup title="Выбор">
      <RibbonButton icon="selectBox" lines={['Действие']} width={55} chevron="below" />
      <RibbonButton icon="selectPrev" lines={['Предыдущий']} width={73} />
    </RibbonGroup>
    <RibbonGroup title="Макрос" launcher>
      <RibbonButton icon="run" lines={['Выполнить']} width={66} chevron="below" />
      <RibbonButton icon="record" lines={['Запись']} width={42} />
      <RibbonButton icon="terminal" lines={['Включить', 'эхо']} width={56} />
    </RibbonGroup>
    <RibbonGroup title="Утилиты">
      <RibbonButton icon="calculator" lines={['Калькулятор']} width={71} />
      <RibbonButton icon="measure" lines={['Измерение']} width={66} />
      <RibbonButton icon="mirror" lines={['Зеркально', 'отразить проект']} width={92} />
    </RibbonGroup>
    <RibbonGroup title="Совместная работа">
      <RibbonButton icon="shared" lines={['Общие', 'виды ']} width={103} chevron="inline" />
    </RibbonGroup>
  </RibbonBar>
)

const TreeNode = ({ node, last, child }) => {
  const sign = node.items ? '−' : node.sign
  return (
    <li>
      <TreeRow>
        {child && <Rail />}
        <Joint $last={last}>
          {sign && (
            <Expander type="button" aria-label={sign === '+' ? 'Развернуть' : 'Свернуть'}>
              <svg width="7" height="7" viewBox="0 0 7 7" aria-hidden="true">
                <path
                  d={sign === '+' ? 'M1 3.500h5M3.500 1v5' : 'M1 3.500h5'}
                  stroke="#26427a"
                />
              </svg>
            </Expander>
          )}
        </Joint>
        {child && <Slot>{node.state && <Icon name={node.state} />}</Slot>}
        {child && <Slot>{node.bulb && <Icon name={node.bulb} />}</Slot>}
        <Icon name={node.icon} />
        <NodeLabel
          $bold={node.bold || node.current}
          $selected={node.selected}
          $child={child}
        >
          {node.current && <Marker>&gt; </Marker>}
          {node.label}
        </NodeLabel>
      </TreeRow>
      {node.items && (
        <TreeList>
          {node.items.map((item, i) => (
            <TreeNode
              key={item.label}
              node={item}
              last={i === node.items.length - 1}
              child
            />
          ))}
        </TreeList>
      )}
    </li>
  )
}

const Explorer = () => (
  <ExplorerPanel>
    <PanelHead>
      <PanelTitle>Проводник</PanelTitle>
      <PlainButton type="button" aria-label="Меню панели">
        <Icon name="caret" />
      </PlainButton>
      <PlainButton type="button" aria-label="Закрыть панель">
        <Icon name="close" />
      </PlainButton>
    </PanelHead>
    <PanelTabs>
      <PanelTab type="button" $active aria-label="Дерево">
        <Icon name="treeTab" />
      </PanelTab>
      <PanelTab type="button" aria-label="Обозреватель">
        <Icon name="globe" />
      </PanelTab>
      <PanelTab type="button" aria-label="Корзина">
        <Icon name="trash" />
      </PanelTab>
    </PanelTabs>
    <Tree>
      {TREE.map((node, i) => (
        <TreeNode key={node.label} node={node} last={i === TREE.length - 1} />
      ))}
    </Tree>
  </ExplorerPanel>
)

const Scene = () => (
  <SceneBox>
    <SceneDrawing aria-hidden="true">
      <defs>
        <linearGradient id="wall" x1="0" y1="0" x2="0" y2="1">
          <stop offset="0" stopColor="#d5d5e1" />
          <stop offset="1" stopColor="#cfcfdc" />
        </linearGradient>
        <linearGradient id="wallShade" x1="0" y1="0" x2="0" y2="1">
          <stop offset="0" stopColor="#a5a5b8" />
          <stop offset="1" stopColor="#8c8b9e" />
        </linearGradient>
      </defs>
      <path d="M0 0h36v1200H0z" fill="url(#wall)" />
      <path d="M36 563L25 647 15 710 7 757 0 804v400h36z" fill="url(#wallShade)" />
      <path d="M36.500 0v560" stroke="#000" />
      <g fill="none" shapeRendering="crispEdges">
        <path
          d="M34 580l-3 90-9 60L5 812"
          stroke="#222"
          strokeDasharray="22 4"
        />
        <path d="M36 560v50l-3 55-10 65L7 812 0 842" stroke="#ee8a2c" strokeWidth="2" />
        <path d="M0 361l743 44" stroke="#e81fe8" />
        <path d="M743 405c-38 39-63 95-64 152" stroke="#e8892a" />
        <path d="M679 557l-3 102c-2 62-9 134-24 204" stroke="#28e028" />
      </g>
      <circle cx="743" cy="405" r="4" fill="none" stroke="#eee" />
      <path d="M34 557h4v4h-4z" fill="#2fe3e8" />
      <g fill="none" stroke="#e01515" strokeWidth="2">
        <path d="M30 832H8M30 832v22" />
        <path d="M1 832l7-2v4zM30 861l-2-7h4z" strokeWidth="1" />
      </g>
      <path d="M28.500 829.500h4v4h-4z" fill="#c33" stroke="#fff" strokeWidth="2" />
      <AxisLetter x="2" y="828" fill="#e01515">X</AxisLetter>
      <AxisLetter x="33" y="858" fill="#e01515">Y</AxisLetter>
      <AxisLetter x="34" y="828" fill="#fff">Z</AxisLetter>
    </SceneDrawing>
    <ViewCube type="button">
      <span>Верх</span>
    </ViewCube>
  </SceneBox>
)

const ViewBar = () => (
  <ViewPanel>
    <ViewHead>
      <PlainButton type="button" aria-label="Меню панели вида">
        <Icon name="caret" />
      </PlainButton>
      <PlainButton type="button" aria-label="Закрыть панель вида">
        <Icon name="close" />
      </PlainButton>
    </ViewHead>
    <ViewTools>
      {VIEW_TOOLS.map(tool => (
        <ViewTool
          key={tool.icon}
          type="button"
          aria-label={tool.label}
          $on={tool.on}
          $gap={tool.gap}
          $more={tool.more}
        >
          <Icon name={tool.icon} />
        </ViewTool>
      ))}
    </ViewTools>
  </ViewPanel>
)

const StatusField = ({ icon, label, value }) => (
  <FieldLabel>
    <Icon name={icon} />
    <Field aria-label={label} defaultValue={value} />
  </FieldLabel>
)

const StatusBar = () => (
  <Status>
    <StatusButton type="button" aria-label="Локальная СК" $more>
      <Icon name="block" size={24} />
    </StatusButton>
    <SelectWrap>
      <Select aria-label="Активная СК" defaultValue="1">
        <option value="1">1 установ</option>
        <option value="2">2 установ</option>
      </Select>
      <Icon name="chevronDown" size={12} />
    </SelectWrap>
    <StatusButton type="button" aria-label="Плоскость X">
      <Icon name="planeX" />
    </StatusButton>
    <StatusButton type="button" aria-label="Плоскость Y">
      <Icon name="planeY" />
    </StatusButton>
    <StatusButton type="button" aria-label="Плоскость Z" $on>
      <Icon name="planeZ" />
    </StatusButton>
    <StatusButton type="button" aria-label="Блокировка">
      <Icon name="lock" />
    </StatusButton>
    <Spacer $width={13} />
    <StatusButton type="button" aria-label="Сетка" disabled>
      <Icon name="grid" />
    </StatusButton>
    <Spacer $width={2} />
    <Field aria-label="Шаг сетки" disabled $width={54} />
    <Spacer $width={12} />
    <FieldSet>
      <Field aria-label="X" defaultValue="-3,3054" />
      <Field aria-label="Y" defaultValue="-6,7116" />
      <Field aria-label="Z" defaultValue="0" />
    </FieldSet>
    <StatusButton type="button" aria-label="Координаты" disabled>
      <Icon name="xyz" />
    </StatusButton>
    <StatusButton type="button" aria-label="Расстояние" disabled>
      <Icon name="points" />
    </StatusButton>
    <Spacer $width={2} />
    <Field aria-label="Длина" disabled $width={90} />
    <Spacer $width={12} />
    <StatusButton type="button" aria-label="Пауза вычислений">
      <Icon name="calcPause" />
    </StatusButton>
    <Spacer $width={8} />
    <StatusField icon="ruler" label="Единицы" value="мм" />
    <StatusField icon="crosshair" label="Допуск" value="0,01" />
    <StatusField icon="toolTol" label="Осевой припуск" value="0,0" />
    <StatusField icon="curveTol" label="Припуск" value="0,0" />
    <StatusField icon="diameter" label="Диаметр" value="6,0" />
    <StatusField icon="radius" label="Радиус" value="0,0" />
  </Status>
)

const App = () => (
  <Shell>
    <GlobalStyle />
    <Defs aria-hidden="true">
      <radialGradient id="yellowBall" cx=".4" cy=".3" r=".7">
        <stop offset="0" stopColor="#ffe566" />
        <stop offset="1" stopColor="#d9a514" />
      </radialGradient>
      <radialGradient id="blueBall" cx=".4" cy=".7" r=".8">
        <stop offset="0" stopColor="#7d9cff" />
        <stop offset="1" stopColor="#2c49cf" />
      </radialGradient>
    </Defs>
    <TitleBar>
      <QuickAccess>
        <Icon name="app" />
        <PlainButton type="button" aria-label="Открыть">
          <Icon name="open" />
        </PlainButton>
        <PlainButton type="button" aria-label="Сохранить">
          <Icon name="save" />
        </PlainButton>
        <PlainButton type="button" aria-label="Создать локальную СК">
          <Icon name="block" size={16} />
        </PlainButton>
        <PlainButton type="button" aria-label="Ещё">
          <Icon name="chevronDown" />
        </PlainButton>
        <PlainButton type="button" aria-label="Настроить панель">
          <Icon name="overflow" />
        </PlainButton>
      </QuickAccess>
      <Title>
        <span>Autodesk PowerMill Ultimate 2023</span>
        <span>[ Изменяемый проект * Петля правая ]</span>
      </Title>
      <WindowButtons>
        <PlainButton type="button" aria-label="Справка">
          <Icon name="help" />
        </PlainButton>
        <PlainButton type="button" aria-label="Свернуть">
          <Icon name="minimize" />
        </PlainButton>
        <PlainButton type="button" aria-label="Восстановить">
          <Icon name="restore" />
        </PlainButton>
        <PlainButton type="button" aria-label="Закрыть">
          <Icon name="close" />
        </PlainButton>
      </WindowButtons>
    </TitleBar>
    <Tabs>
      <FileTab type="button">Файл</FileTab>
      <Tab type="button" $active>
        Главная
      </Tab>
      {TABS.map(tab => (
        <Tab key={tab} type="button">
          {tab}
        </Tab>
      ))}
      <Collapse type="button" aria-label="Свернуть ленту">
        <Icon name="chevronUp" />
      </Collapse>
    </Tabs>
    <Ribbon />
    <Main>
      <Explorer />
      <Scene />
      <ViewBar />
    </Main>
    <StatusBar />
  </Shell>
)

export default App

/* ---------- styles ---------- */

const Drawing = styled.svg`
  display: block;
  flex: none;
  overflow: visible;
`

const Defs = styled.svg`
  position: absolute;
  width: 0;
  height: 0;
`

const Shell = styled.div`
  display: flex;
  flex-direction: column;
  height: 100vh;
  overflow: hidden;
`

const plain = css`
  display: flex;
  align-items: center;
  justify-content: center;
  padding: 0;
  background: transparent;
  border: 0;
`

const PlainButton = styled.button`
  ${plain}
`

const TitleBar = styled.header`
  display: flex;
  flex: none;
  align-items: flex-start;
  height: 25px;
  padding-top: 2px;
`

const QuickAccess = styled.div`
  display: flex;
  align-items: center;
  gap: 6px;
  padding-left: 2px;

  > :nth-child(2) {
    margin-left: 5px;
  }
`

const Title = styled.div`
  display: flex;
  flex: 1;
  justify-content: center;
  gap: 12px;
  padding-right: 16px;
  line-height: 18px;
  color: #444;
`

const WindowButtons = styled.div`
  display: flex;
  align-items: center;
  gap: 26px;
  padding-right: 14px;
`

const Tabs = styled.nav`
  display: flex;
  flex: none;
  height: 25px;
`

const Tab = styled.button`
  height: 26px;
  padding: 0 14px 3px;
  background: transparent;
  border: 1px solid transparent;
  border-bottom: 0;
  white-space: nowrap;

  ${p =>
    p.$active &&
    css`
      position: relative;
      background: #fff;
      border-color: var(--line);
      color: #444;
    `}
`

const FileTab = styled(Tab)`
  height: 25px;
  width: 52px;
  margin-right: 3px;
  padding: 0 0 2px;
  background: var(--grey);
  color: #fff;
`

const Collapse = styled.button`
  ${plain}
  height: 20px;
  margin-left: auto;
  margin-right: 7px;
`

const RibbonBar = styled.div`
  display: flex;
  flex: none;
  height: 93px;
  margin-right: 1px;
  padding: 2px 0;
  background: #fff;
  border: 1px solid var(--line);
  border-width: 1px 1px 1px 0;
`

const Group = styled.section`
  display: flex;
  flex-direction: column;
  flex: none;
  padding: 5px 5px 0;
  border-right: 1px solid var(--line);
`

const GroupItems = styled.div`
  display: flex;
  flex: 1;
`

const GroupTitle = styled.div`
  display: flex;
  justify-content: center;
  position: relative;
  height: 16px;
`

const Launcher = styled.button`
  ${plain}
  position: absolute;
  right: 0;
  top: 2px;
`

const BigButton = styled.button`
  display: flex;
  flex-direction: column;
  align-items: center;
  gap: 2px;
  width: ${p => p.$width}px;
  padding: 0;
  background: transparent;
  border: 0;
  white-space: nowrap;

  &:disabled {
    color: #b4b4b4;
  }
`

const Caption = styled.span`
  display: flex;
  flex-direction: column;
  align-items: center;

  span {
    display: flex;
    align-items: center;
    min-height: 13px;
    white-space: pre;
  }
`

const SmallButtons = styled.div`
  display: flex;
  flex-direction: column;
  width: 144px;
  padding-left: 3px;
  gap: 6px;
`

const SmallButton = styled.button`
  display: flex;
  align-items: center;
  gap: 4px;
  height: 16px;
  padding: 0 0 2px;
  background: transparent;
  border: 0;
  white-space: nowrap;
`

const Gallery = styled.div`
  display: flex;
  height: 59px;
  border: 1px solid #dcdcdc;
`

const GalleryItem = styled.button`
  display: flex;
  flex-direction: column;
  align-items: center;
  width: 80px;
  padding: 5px 0 0;
  background: transparent;
  border: 0;
  white-space: nowrap;
`

const GalleryScroll = styled.div`
  display: flex;
  flex-direction: column;
  width: 16px;
  border-left: 1px solid #dcdcdc;

  button {
    ${plain}
    flex: 1;
  }

  button + button {
    border-top: 1px solid #dcdcdc;
  }
`

const Main = styled.main`
  display: flex;
  flex: 1;
  min-height: 0;
`

const ExplorerPanel = styled.aside`
  display: flex;
  flex-direction: column;
  flex: none;
  width: 315px;
  border-right: 1px solid var(--line);
`

const PanelHead = styled.div`
  display: flex;
  align-items: center;
  gap: 10px;
  height: 36px;
  padding: 0 11px 2px 4px;
`

const PanelTitle = styled.h1`
  flex: 1;
  margin: 0;
  font-size: var(--text-xl);
  font-weight: 400;
  line-height: 24px;
`

const PanelTabs = styled.div`
  display: flex;
  height: 35px;
  padding-left: 2px;
  border-bottom: 1px solid var(--line);
`

const PanelTab = styled.button`
  ${plain}
  width: 36px;
  padding-top: 4px;

  ${p =>
    p.$active &&
    css`
      width: 41px;
      height: 35px;
      margin-right: -4px;
      padding-top: 2px;
      background: #fff;
      border: 1px solid var(--line);
      border-bottom: 0;
    `}
`

const TreeList = styled.ul`
  margin: 0;
  padding: 0;
  list-style: none;
`

const Tree = styled(TreeList)`
  flex: 1;
  overflow: hidden;
  padding-top: 3px;
  background: #fff;
`

const TreeRow = styled.div`
  display: flex;
  align-items: center;
  height: 18px;
`

const dotsDown = 'repeating-linear-gradient(#888 0 1px, transparent 1px 2px)'
const dotsAcross =
  'repeating-linear-gradient(90deg, #888 0 1px, transparent 1px 2px)'

const Rail = styled.span`
  width: 19px;
  height: 18px;
  background: ${dotsDown} 11px 0 / 1px 100% no-repeat;
`

const Joint = styled.span`
  display: flex;
  width: 22px;
  height: 18px;
  padding: 6px 0 0 7px;
  background:
    ${dotsDown} 11px 0 / 1px ${p => (p.$last ? '10px' : '100%')} no-repeat,
    ${dotsAcross} 11px 10px / 11px 1px no-repeat;
`

const Expander = styled.button`
  ${plain}
  width: 9px;
  height: 9px;
  background: #fff;
  border: 1px solid #919191;
`

const Slot = styled.span`
  width: 16px;
  height: 16px;
`

const NodeLabel = styled.span`
  margin-left: ${p => (p.$child ? 3 : 4)}px;
  padding: 0 2px;
  line-height: 18px;
  white-space: nowrap;
  color: #000;
  font-weight: ${p => (p.$bold ? 700 : 400)};
  background: ${p => (p.$selected ? '#f0f0f0' : 'transparent')};
`

const Marker = styled.span`
  margin-right: 2px;
`

const SceneBox = styled.section`
  position: relative;
  flex: 1;
  overflow: hidden;
  background: linear-gradient(#f2f2f2, #6e6e6e);
`

const SceneDrawing = styled.svg`
  display: block;
  width: 100%;
  height: 100%;
`

const AxisLetter = styled.text`
  font-size: 15px;
  font-weight: 500;
`

const ViewCube = styled.button`
  ${plain}
  position: absolute;
  top: 36px;
  right: 36px;
  width: 49px;
  height: 49px;
  background: #ececec;
  border: 1px solid #9c9c9c;
  border-radius: 2px;
  box-shadow: 0 0 8px rgba(0, 0, 0, 0.15);

  span {
    padding: 8px 1px;
    background: #e0e2e6;
    color: #858a90;
    transform: rotate(180deg);
  }
`

const ViewPanel = styled.aside`
  flex: none;
  width: 55px;
  background: #fff;
  border-left: 1px solid var(--line);
`

const ViewHead = styled.div`
  display: flex;
  align-items: center;
  justify-content: flex-end;
  gap: 10px;
  height: 35px;
  padding-right: 6px;
  background: var(--bg);
  border-bottom: 1px solid var(--line);
`

const ViewTools = styled.div`
  display: flex;
  flex-direction: column;
  padding: 4px 0 0 9px;
`

const moreCorner = css`
  &::after {
    content: '';
    position: absolute;
    right: 1px;
    bottom: 1px;
    border: 3px solid #000;
    border-top-color: transparent;
    border-left-color: transparent;
  }
`

const ViewTool = styled.button`
  ${plain}
  position: relative;
  width: 40px;
  height: 40px;
  margin-top: ${p => (p.$gap ? 7 : 0)}px;
  ${p => p.$more && moreCorner}
  ${p =>
    p.$on &&
    css`
      background: #cfe8fb;
      border: 1px solid #a3d0f3;
    `}
`

const Status = styled.footer`
  display: flex;
  flex: none;
  align-items: center;
  height: 33px;
  padding: 0 0 1px 3px;
  border-top: 1px solid var(--line);
`

const StatusButton = styled.button`
  ${plain}
  position: relative;
  width: 26px;
  height: 24px;
  ${p => p.$more && moreCorner}
  ${p =>
    p.$on &&
    css`
      background: #b9dcf7;
      border: 1px solid #8fc4ee;
    `}
`

const SelectWrap = styled.label`
  display: flex;
  align-items: center;
  width: 88px;
  height: 22px;
  margin: 0 4px 0 3px;
  padding-right: 2px;
  background: #e1e1e1;
`

const Select = styled.select`
  flex: 1;
  min-width: 0;
  padding: 0 0 0 4px;
  background: transparent;
  border: 0;
  appearance: none;
`

const Spacer = styled.span`
  width: ${p => p.$width}px;
`

const Field = styled.input`
  width: ${p => p.$width || 57}px;
  height: 24px;
  padding: 0 6px 2px;
  background: var(--bg);
  border: 1px solid #777;
  box-shadow: inset -1px -1px #fff;

  &:disabled {
    border-color: #c4c4c4;
  }
`

const FieldSet = styled.div`
  display: flex;
  gap: 3px;
  margin-right: 2px;
`

const FieldLabel = styled.label`
  display: flex;
  align-items: center;
  gap: 4px;
  width: 86px;
  padding-left: 5px;
`
